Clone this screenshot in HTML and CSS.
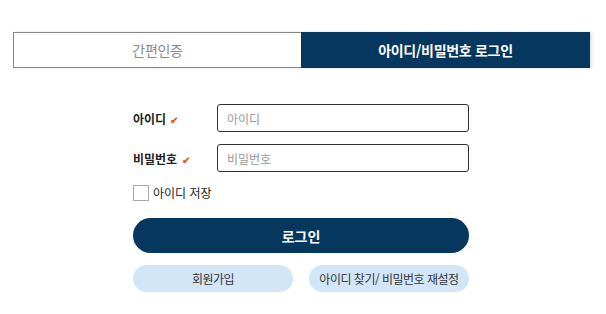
FILE: index.html
```html
<!DOCTYPE html>
<html lang="ko">
<head>
  <meta charset="UTF-8">
  <title>로그인</title>
  <link rel="stylesheet" href="styles.css">
</head>
<body>

<div class="tabs">
  <div class="tab">간편인증</div>
  <div class="tab active">아이디/비밀번호 로그인</div>
</div>

<form class="login">
  <div class="row">
    <label class="label" for="uid">아이디 <span class="req">✔</span></label>
    <input class="field" id="uid" type="text" placeholder="아이디">
  </div>
  <div class="row">
    <label class="label" for="upw">비밀번호 <span class="req">✔</span></label>
    <input class="field" id="upw" type="password" placeholder="비밀번호">
  </div>
  <label class="save">
    <span class="box"></span>
    아이디 저장
  </label>
  <button type="button" class="btn-login">로그인</button>
  <div class="links">
    <button type="button" class="btn-sub">회원가입</button>
    <button type="button" class="btn-sub">아이디 찾기/ 비밀번호 재설정</button>
  </div>
</form>

</body>
</html>
```

FILE: styles.css
```css
body {
  margin: 0;
  padding: 32px 0 0 13px;
  font-family: "Noto Sans CJK KR", "Noto Sans", sans-serif;
  background-color: #fff;
  color: #222;
}

/* Tabs */
.tabs {
  display: flex;
  width: 577px;
  height: 36px;
  box-shadow: 2px 0 3px rgba(0, 0, 0, 0.12);
}

.tab {
  flex: 0 0 288px;
  box-sizing: border-box;
  display: flex;
  align-items: center;
  justify-content: center;
  border: 1px solid #888;
  border-right: none;
  font-size: 14px;
  letter-spacing: -0.3px;
  color: #8a8a8a;
}

.tab.active {
  flex: 1;
  border: none;
  background-color: #05375f;
  color: #fff;
  font-weight: bold;
}

/* Form */
.login {
  width: 336px;
  margin: 36px 0 0 120px;
}

.row {
  display: flex;
  align-items: center;
  height: 28px;
  margin-bottom: 12px;
}

.label {
  width: 84px;
  font-size: 12px;
  font-weight: bold;
  color: #222;
}

.req {
  font-size: 10px;
  color: #e8552a;
  margin-left: 1px;
}

.field {
  flex: 1;
  box-sizing: border-box;
  height: 28px;
  border: 1px solid #333;
  border-radius: 3px;
  padding: 0 9px;
  font-family: inherit;
  font-size: 12px;
}

.field::placeholder {
  color: #999;
}

.save {
  display: flex;
  align-items: center;
  gap: 4px;
  font-size: 12px;
  color: #222;
}

.box {
  width: 14px;
  height: 14px;
  border: 1px solid #aaa;
  background: #fff;
}

.btn-login {
  display: block;
  width: 100%;
  height: 35px;
  margin-top: 17px;
  border: none;
  border-radius: 18px;
  background-color: #05375f;
  color: #fff;
  font-family: inherit;
  font-size: 14px;
  font-weight: bold;
}

.links {
  display: flex;
  justify-content: space-between;
  margin-top: 12px;
}

.btn-sub {
  width: 160px;
  height: 27px;
  border: none;
  border-radius: 14px;
  background-color: #d3e6f7;
  color: #333;
  font-family: inherit;
  font-size: 12px;
  letter-spacing: -0.5px;
}
```
